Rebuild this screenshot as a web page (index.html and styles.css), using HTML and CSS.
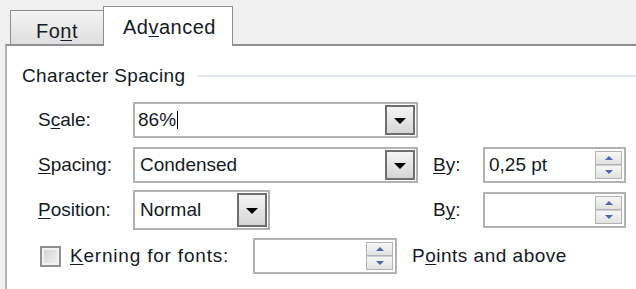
FILE: index.html
```html
<!DOCTYPE html>
<html lang="en">
  <head>
    <meta charset="UTF-8" />
    <title>Font</title>
    <link rel="stylesheet" href="styles.css">
  </head>
  <body>
    <div class="tabs">
      <div class="tab">Fo<u>n</u>t</div>
      <div class="tab tab-active">Ad<u>v</u>anced</div>
    </div>
    <div class="panel">
      <div class="group-title">
        <span class="group-name">Character Spacing</span>
        <span class="group-line"></span>
      </div>
      <div class="rows">
        <label class="label">S<u>c</u>ale:</label>
        <div class="combo combo-wide">
          <span class="value value-edit">86%<span class="caret"></span></span>
          <span class="drop"><span class="tri"></span></span>
        </div>
        <span class="by"></span>
        <span></span>

        <label class="label"><u>S</u>pacing:</label>
        <div class="combo combo-wide">
          <span class="value">Condensed</span>
          <span class="drop"><span class="tri"></span></span>
        </div>
        <label class="by"><u>B</u>y:</label>
        <div class="spin">
          <span class="value">0,25 pt</span>
          <span class="spin-btns">
            <span class="spin-up"><span class="arr-up"></span></span>
            <span class="spin-down"><span class="arr-down"></span></span>
          </span>
        </div>

        <label class="label"><u>P</u>osition:</label>
        <div class="combo combo-short">
          <span class="value">Normal</span>
          <span class="drop"><span class="tri"></span></span>
        </div>
        <label class="by">B<u>y</u>:</label>
        <div class="spin">
          <span class="value"></span>
          <span class="spin-btns">
            <span class="spin-up"><span class="arr-up"></span></span>
            <span class="spin-down"><span class="arr-down"></span></span>
          </span>
        </div>

        <div class="kerning">
          <span class="check"></span>
          <label class="kern-label"><u>K</u>erning for fonts:</label>
          <div class="spin spin-kern">
            <span class="value"></span>
            <span class="spin-btns">
              <span class="spin-up"><span class="arr-up"></span></span>
              <span class="spin-down"><span class="arr-down"></span></span>
            </span>
          </div>
          <label class="points">P<u>o</u>ints and above</label>
        </div>
      </div>
    </div>
  </body>
</html>
```

FILE: styles.css
```css
* {
  margin: 0;
  padding: 0;
  box-sizing: border-box;
}
body {
  font-family: "Liberation Sans", Arial, sans-serif;
  font-size: 19px;
  line-height: 22px;
  color: #141a26;
  background-color: #f0f0f0;
  height: 289px;
  overflow: hidden;
  display: flex;
  flex-direction: column;
}
u {
  text-decoration-thickness: 1px;
  text-underline-offset: 2px;
}
.tabs {
  display: flex;
  align-items: flex-end;
  height: 44px;
  padding-left: 10px;
}
.tab {
  width: 94px;
  height: 34px;
  border: 1px solid #8c8e94;
  border-bottom: none;
  background: linear-gradient(#f4f4f4, #dedede);
  font-size: 20px;
  letter-spacing: 0.5px;
  padding: 9px 0 0 25px;
}
.tab-active {
  position: relative;
  width: 130px;
  height: 40px;
  margin-bottom: -2px;
  margin-left: -1px;
  background: #fff;
  padding: 9px 0 0 19px;
}
.panel {
  flex: 1;
  margin-left: 5px;
  background: #fff;
  border-top: 2px solid #8e9096;
  border-left: 2px solid #b4b4b4;
  padding: 19px 0 0 15px;
}
.group-title {
  display: flex;
  align-items: center;
  gap: 13px;
}
.group-name {
  letter-spacing: 0.35px;
}
.group-line {
  flex: 1;
  height: 2px;
  background: #dfe6ed;
}
.rows {
  display: grid;
  grid-template-columns: 95px 285px 65px 143px;
  row-gap: 9px;
  margin-top: 15px;
  padding-left: 16px;
}
.label,
.by {
  display: flex;
  align-items: center;
  height: 36px;
}
.by {
  padding-left: 15px;
}
.combo,
.spin {
  display: flex;
  align-items: center;
  justify-content: space-between;
  height: 36px;
  background: #fff;
  border: 2px solid #b0b2b6;
  padding: 0 1px 0 5px;
}
.combo-short {
  width: 137px;
  height: 40px;
  margin-top: -2px;
}
.value-edit {
  margin-left: -2px;
  display: flex;
  align-items: center;
}
.caret {
  width: 1px;
  height: 18px;
  margin-left: 1px;
  background: #000;
}
.drop {
  display: flex;
  align-items: center;
  justify-content: center;
  width: 30px;
  height: calc(100% - 2px);
  border: 2px solid #6d6e70;
  background: linear-gradient(#f5f5f5, #d6d6d6);
}
.tri {
  width: 0;
  height: 0;
  border-left: 6px solid transparent;
  border-right: 6px solid transparent;
  border-top: 6px solid #000;
  margin-top: 2px;
}
.spin {
  padding: 0 2px 0 4px;
}
.spin-btns {
  display: flex;
  flex-direction: column;
  width: 27px;
  height: 28px;
}
.spin-up,
.spin-down {
  flex: 1;
  display: flex;
  align-items: center;
  justify-content: center;
  border: 1px solid #b3b3b3;
  background: linear-gradient(#f7f7f7, #e1e1e1);
}
.spin-down {
  border-top-color: #cfcfcf;
}
.arr-up,
.arr-down {
  width: 0;
  height: 0;
  border-left: 4px solid transparent;
  border-right: 4px solid transparent;
}
.arr-up {
  border-bottom: 4px solid #4a67b4;
}
.arr-down {
  border-top: 4px solid #4a67b4;
}
.kerning {
  grid-column: 1 / -1;
  display: flex;
  align-items: center;
  height: 36px;
  margin-top: -1px;
}
.check {
  width: 21px;
  height: 21px;
  margin-left: 2px;
  border: 2px solid #8f9093;
  background: linear-gradient(135deg, #cfcfcf, #f4f4f4);
  box-shadow: inset 0 0 0 2px #f2f2f2;
}
.kern-label {
  width: 192px;
  padding-left: 9px;
  letter-spacing: 0.8px;
}
.spin-kern {
  width: 144px;
}
.points {
  margin-left: 15px;
  letter-spacing: 0.5px;
}
```
